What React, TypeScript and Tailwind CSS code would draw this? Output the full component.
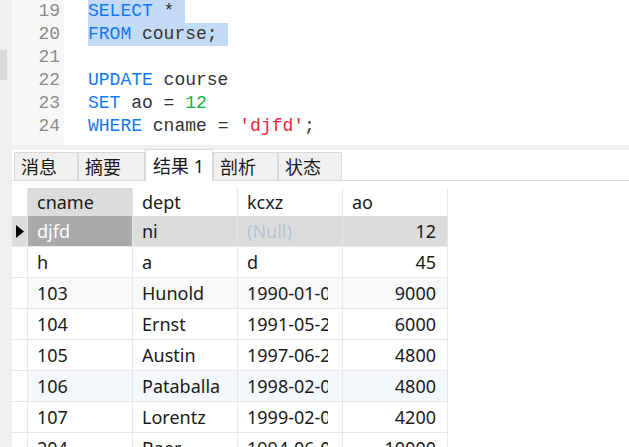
import React from 'react';

const mono = { fontFamily: '"Liberation Mono", "DejaVu Sans Mono", monospace' };
const ui = { fontFamily: '"Noto Sans", "Noto Sans CJK SC", sans-serif' };

type Tok = { t: string; c?: string };

const K = 'text-[#1479ee]';
const lines: { n: number; toks: Tok[]; sel?: boolean }[] = [
  { n: 19, sel: true, toks: [{ t: 'SELECT', c: K }, { t: ' *' }] },
  { n: 20, sel: true, toks: [{ t: 'FROM', c: K }, { t: ' course;' }] },
  { n: 21, toks: [] },
  { n: 22, toks: [{ t: 'UPDATE', c: K }, { t: ' course' }] },
  { n: 23, toks: [{ t: 'SET', c: K }, { t: ' ao = ' }, { t: '12', c: 'text-[#12b23e]' }] },
  { n: 24, toks: [{ t: 'WHERE', c: K }, { t: ' cname = ' }, { t: "'djfd'", c: 'text-[#f0243c]' }, { t: ';' }] },
];

const tabs = [
  { label: '消息', w: 'w-[64px]' },
  { label: '摘要', w: 'w-[67px]' },
  { label: '结果 1', w: 'w-[68px]', active: true },
  { label: '剖析', w: 'w-[65px]' },
  { label: '状态', w: 'w-[64px]' },
];

const rows = [
  ['h', 'a', 'd', '45'],
  ['103', 'Hunold', '1990-01-03', '9000'],
  ['104', 'Ernst', '1991-05-21', '6000'],
  ['105', 'Austin', '1997-06-25', '4800'],
  ['106', 'Pataballa', '1998-02-05', '4800'],
  ['107', 'Lorentz', '1999-02-07', '4200'],
  ['204', 'Baer', '1994-06-07', '10000'],
];

function Cell({
  children,
  className = '',
  right,
  clip = 'w-[88px]',
}: {
  children?: React.ReactNode;
  className?: string;
  right?: boolean;
  clip?: string;
}) {
  return (
    <div
      className={`flex h-full w-[105px] shrink-0 items-center whitespace-nowrap border-r border-[#e8e8e8] ${
        right ? 'justify-end pr-[11px]' : 'pl-[9px]'
      } ${className}`}
    >
      <div className={right ? '' : `${clip} overflow-hidden`}>{children}</div>
    </div>
  );
}

export default function App() {
  return (
    <div className="flex h-[447px] w-[629px] overflow-hidden bg-white text-[#1a1a1a]">
      {/* Left strip */}
      <div className="flex w-[12px] shrink-0 flex-col bg-[#efefef]">
        <div className="mt-[50px] h-[30px] w-[7px] bg-[#dadada]" />
      </div>

      <div className="flex min-w-0 flex-1 flex-col">
        {/* Editor */}
        <div className="flex h-[145px] shrink-0 text-[18px] leading-[23px]" style={mono}>
          <div className="w-[52px] shrink-0 bg-[#f7f7f7] pr-[4px] text-right text-[#8a8a8a]">
            {lines.map((l) => (
              <div key={l.n} className="h-[23px]">
                {l.n}
              </div>
            ))}
          </div>
          <div className="flex-1 pl-[24px] text-[#333333]">
            {lines.map((l) => (
              <div key={l.n} className="h-[23px] whitespace-pre">
                <span className={`inline-block h-[23px] ${l.sel ? 'bg-[#c2daf6]' : ''}`}>
                  {l.toks.map((tk, i) => (
                    <span key={i} className={tk.c}>
                      {tk.t}
                    </span>
                  ))}
                  {l.sel ? ' ' : ''}
                </span>
              </div>
            ))}
          </div>
        </div>
        <div className="h-[5px] shrink-0 bg-[#f0f0f0]" />

        {/* Tabs */}
        <div className="flex h-[31px] shrink-0 items-end border-b border-[#dcdcdc] pl-[2px] text-[18px]" style={ui}>
          {tabs.map((t) =>
            t.active ? (
              <div
                key={t.label}
                className={`${t.w} relative z-10 -mb-px flex h-[32px] items-center border border-b-0 border-[#dadada] bg-white pl-[7px] leading-none`}
              >
                {t.label}
              </div>
            ) : (
              <div
                key={t.label}
                className={`${t.w} flex h-[28px] items-center border border-b-0 border-[#d8d8d8] bg-[#f0f0f0] pl-[6px] leading-none`}
              >
                {t.label}
              </div>
            )
          )}
        </div>

        {/* Grid */}
        <div className="pt-[7px] text-[18px]" style={ui}>
          <div className="flex h-[28px] w-fit">
            <div className="h-full w-[16px] shrink-0 border-r border-[#e8e8e8]" />
            <Cell className="bg-[#dcdcdc]">cname</Cell>
            <Cell>dept</Cell>
            <Cell>kcxz</Cell>
            <Cell>ao</Cell>
          </div>
          <div className="flex h-[31px] w-fit border-b border-[#e8e8e8] bg-[#dcdcdc]">
            <div className="flex h-full w-[16px] shrink-0 items-center justify-center border-r border-[#e8e8e8]">
              <svg width="8" height="13" viewBox="0 0 8 13">
                <polygon points="0,0 8,6.5 0,13" fill="#000" />
              </svg>
            </div>
            <Cell className="bg-[#a9a9a9] text-white">djfd</Cell>
            <Cell>ni</Cell>
            <Cell className="text-[#b9c3d6]">(Null)</Cell>
            <Cell right>12</Cell>
          </div>
          {rows.map((r, i) => (
            <div key={r[0]} className="flex h-[31px] w-fit">
              <div className="h-full w-[16px] shrink-0 border-b border-r border-[#e8e8e8]" />
              <div
                className={`flex h-full border-b border-[#e8e8e8] ${
                  i === 1 ? 'bg-[#f8f8f8]' : i === 4 ? 'bg-[#f4f8fc]' : ''
                }`}
              >
                <Cell>{r[0]}</Cell>
                <Cell>{r[1]}</Cell>
                <Cell clip="w-[81px]">{r[2]}</Cell>
                <Cell right>{r[3]}</Cell>
              </div>
            </div>
          ))}
        </div>
      </div>
    </div>
  );
}
